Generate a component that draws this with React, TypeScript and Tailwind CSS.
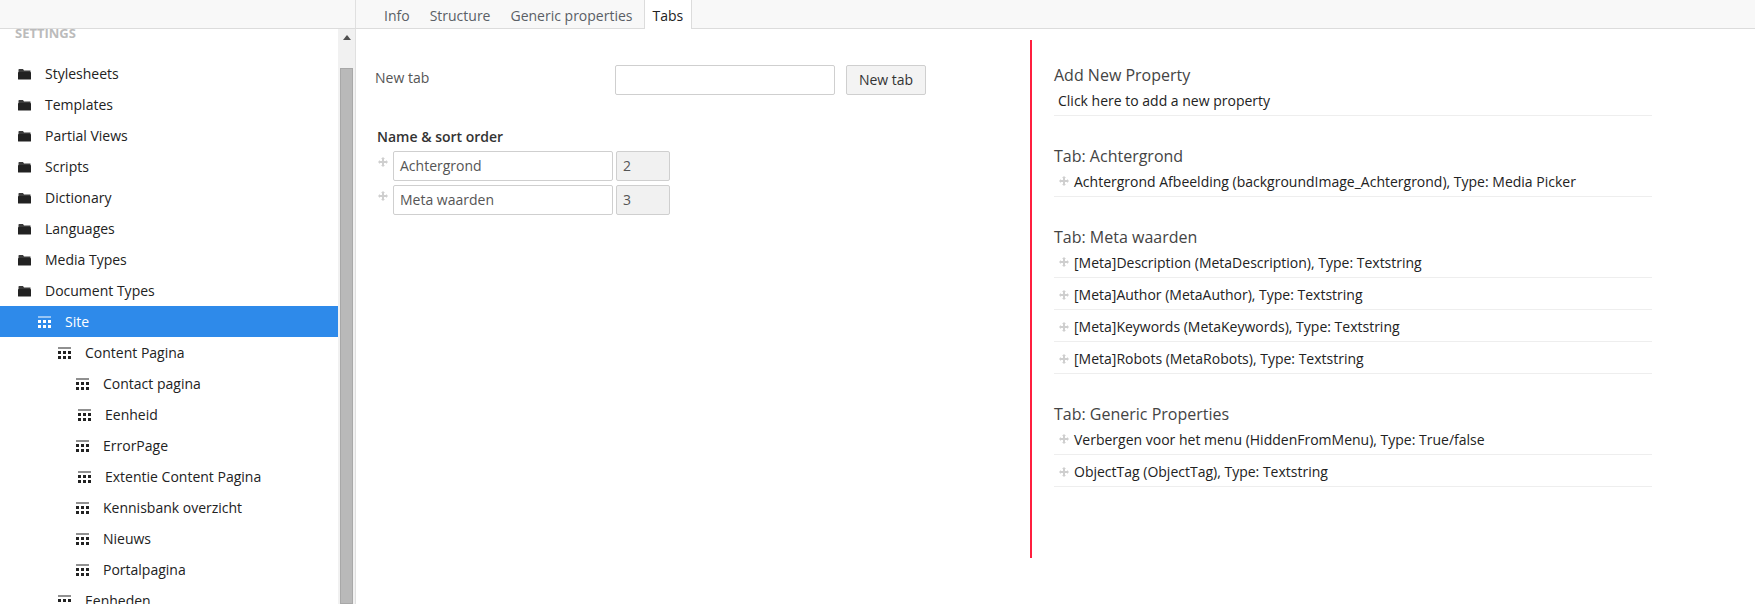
const tree = [
  { label: "Stylesheets", icon: "folder", pad: "pl-[18px]" },
  { label: "Templates", icon: "folder", pad: "pl-[18px]" },
  { label: "Partial Views", icon: "folder", pad: "pl-[18px]" },
  { label: "Scripts", icon: "folder", pad: "pl-[18px]" },
  { label: "Dictionary", icon: "folder", pad: "pl-[18px]" },
  { label: "Languages", icon: "folder", pad: "pl-[18px]" },
  { label: "Media Types", icon: "folder", pad: "pl-[18px]" },
  { label: "Document Types", icon: "folder", pad: "pl-[18px]" },
  { label: "Site", icon: "grid", pad: "pl-[38px]", active: true },
  { label: "Content Pagina", icon: "grid", pad: "pl-[58px]" },
  { label: "Contact pagina", icon: "grid", pad: "pl-[76px]" },
  { label: "Eenheid", icon: "grid", pad: "pl-[78px]" },
  { label: "ErrorPage", icon: "grid", pad: "pl-[76px]" },
  { label: "Extentie Content Pagina", icon: "grid", pad: "pl-[78px]" },
  { label: "Kennisbank overzicht", icon: "grid", pad: "pl-[76px]" },
  { label: "Nieuws", icon: "grid", pad: "pl-[76px]" },
  { label: "Portalpagina", icon: "grid", pad: "pl-[76px]" },
  { label: "Eenheden", icon: "grid", pad: "pl-[58px]" },
];

const groups = [
  {
    title: "Tab: Achtergrond",
    rows: ["Achtergrond Afbeelding (backgroundImage_Achtergrond), Type: Media Picker"],
  },
  {
    title: "Tab: Meta waarden",
    rows: [
      "[Meta]Description (MetaDescription), Type: Textstring",
      "[Meta]Author (MetaAuthor), Type: Textstring",
      "[Meta]Keywords (MetaKeywords), Type: Textstring",
      "[Meta]Robots (MetaRobots), Type: Textstring",
    ],
  },
  {
    title: "Tab: Generic Properties",
    rows: [
      "Verbergen voor het menu (HiddenFromMenu), Type: True/false",
      "ObjectTag (ObjectTag), Type: Textstring",
    ],
  },
];

function FolderIcon() {
  return (
    <svg width="13" height="12" viewBox="0 0 13 12" className="shrink-0">
      <path d="M1 1h4l1 1.500h6.500V4H0.500V1.500z" fill="#3a3a3a" />
      <rect x="0" y="4" width="13" height="7.500" rx="0.500" fill="#222" />
    </svg>
  );
}

function GridIcon({ light }: { light?: boolean }) {
  const c = light ? "#fff" : "#222";
  return (
    <svg width="13" height="12" viewBox="0 0 13 12" className="shrink-0" fill={c}>
      <rect x="0" y="0" width="13" height="2" opacity="0.5" />
      <rect x="0" y="4" width="3" height="3" />
      <rect x="5" y="4" width="3" height="3" />
      <rect x="10" y="4" width="3" height="3" />
      <rect x="0" y="9" width="3" height="3" />
      <rect x="5" y="9" width="3" height="3" />
      <rect x="10" y="9" width="3" height="3" />
    </svg>
  );
}

function DragIcon() {
  return (
    <svg width="10" height="10" viewBox="0 0 10 10" fill="#cfcfcf" className="shrink-0">
      <path d="M5 0l2 2H6v2h2V3l2 2-2 2V6H6v2h1l-2 2-2-2h1V6H2v1L0 5l2-2v1h2V2H3z" />
    </svg>
  );
}

export default function App() {
  return (
    <div className="h-[604px] w-[1755px] overflow-hidden bg-white font-['Open_Sans',sans-serif] text-[14px]">
      {/* tabs bar */}
      <div className="flex h-[29px] border-b border-[#dcdcdc] bg-[#f8f8f8]">
        <div className="w-[356px] shrink-0 border-r border-[#e0e0e0]" />
        <div className="flex pl-[12px] text-[#5a5f66]">
          <div className="px-[16px] pt-[5px]">Info</div>
          <div className="px-[4px] pt-[5px]">Structure</div>
          <div className="pt-[5px] pr-[11px] pl-[16px]">Generic properties</div>
          <div className="h-[29px] border-x border-[#dcdcdc] bg-white px-[8px] pt-[5px] text-[#222]">Tabs</div>
        </div>
      </div>

      <div className="flex h-[575px]">
        {/* tree */}
        <div className="relative w-[338px] shrink-0 overflow-hidden">
          <div className="h-[29px] pl-[15px] text-[13px] leading-[8px] font-bold text-[#bbbbbb]">SETTINGS</div>
          {tree.map((item) => (
            <div
              key={item.label}
              className={`flex h-[31px] items-center ${item.pad} ${item.active ? "bg-[#2e8aea] text-white" : "text-[#222]"}`}
            >
              {item.icon === "folder" ? <FolderIcon /> : <GridIcon light={item.active} />}
              <span className="ml-[14px]">{item.label}</span>
            </div>
          ))}
        </div>

        {/* scrollbar */}
        <div className="flex w-[18px] shrink-0 flex-col items-start border-r border-[#e0e0e0] bg-[#f1f1f1]">
          <div className="mt-[6px] ml-[5px] h-0 w-0 border-x-[4px] border-b-[5px] border-x-transparent border-b-[#505050]" />
          <div className="mt-[28px] ml-[2px] h-[600px] w-[13px] border border-[#a8a8a8] bg-[#b9b9b9]" />
        </div>

        {/* form column */}
        <div className="w-[674px] shrink-0 pt-[36px] pl-[19px] text-[#555]">
          <div className="flex items-start">
            <div className="w-[240px] pt-[2px]">New tab</div>
            <div className="h-[30px] w-[220px] rounded-[2px] border border-[#cfcfcf] bg-white" />
            <div className="ml-[11px] flex h-[30px] w-[80px] items-center justify-center rounded-[2px] border border-[#cfcfcf] bg-[#f3f3f3] pb-px text-[#333]">
              New tab
            </div>
          </div>
          <div className="mt-[31px] pl-[2px] font-semibold text-[#333]">Name &amp; sort order</div>
          <div className="mt-[4px] flex flex-col gap-[4px] pl-[3px]">
            {[["Achtergrond", "2"], ["Meta waarden", "3"]].map(([name, order]) => (
              <div key={name} className="flex items-start">
                <div className="w-[15px] pt-[6px]"><DragIcon /></div>
                <div className="flex h-[30px] w-[220px] items-center rounded-[2px] border border-[#cfcfcf] pb-px pl-[6px]">{name}</div>
                <div className="ml-[3px] flex h-[30px] w-[54px] items-center rounded-[2px] border border-[#cfcfcf] bg-[#f1f1f1] pb-px pl-[6px]">{order}</div>
              </div>
            ))}
          </div>
        </div>

        {/* properties column */}
        <div className="mt-[11px] box-content h-[518px] w-[598px] shrink-0 border-l-2 border-[#ff1f3f] pl-[22px]">
          <div className="pt-[23px] text-[16px] leading-[24px] text-[#444]">Add New Property</div>
          <div className="flex h-[29px] items-center border-b border-[#eeeeee] pb-[2px] pl-[4px] text-[#222]">Click here to add a new property</div>
          {groups.map((group) => (
            <div key={group.title} className="mt-[28px]">
              <div className="text-[16px] leading-[24px] text-[#444]">{group.title}</div>
              {group.rows.map((row, i) => (
                <div
                  key={row}
                  className={`flex items-center gap-[5px] border-b border-[#eeeeee] pl-[5px] text-[#222] ${i === 0 ? "h-[29px] pb-[2px]" : "h-[32px] pt-[2px]"}`}
                >
                  <DragIcon />
                  <span>{row}</span>
                </div>
              ))}
            </div>
          ))}
        </div>
      </div>
    </div>
  );
}
